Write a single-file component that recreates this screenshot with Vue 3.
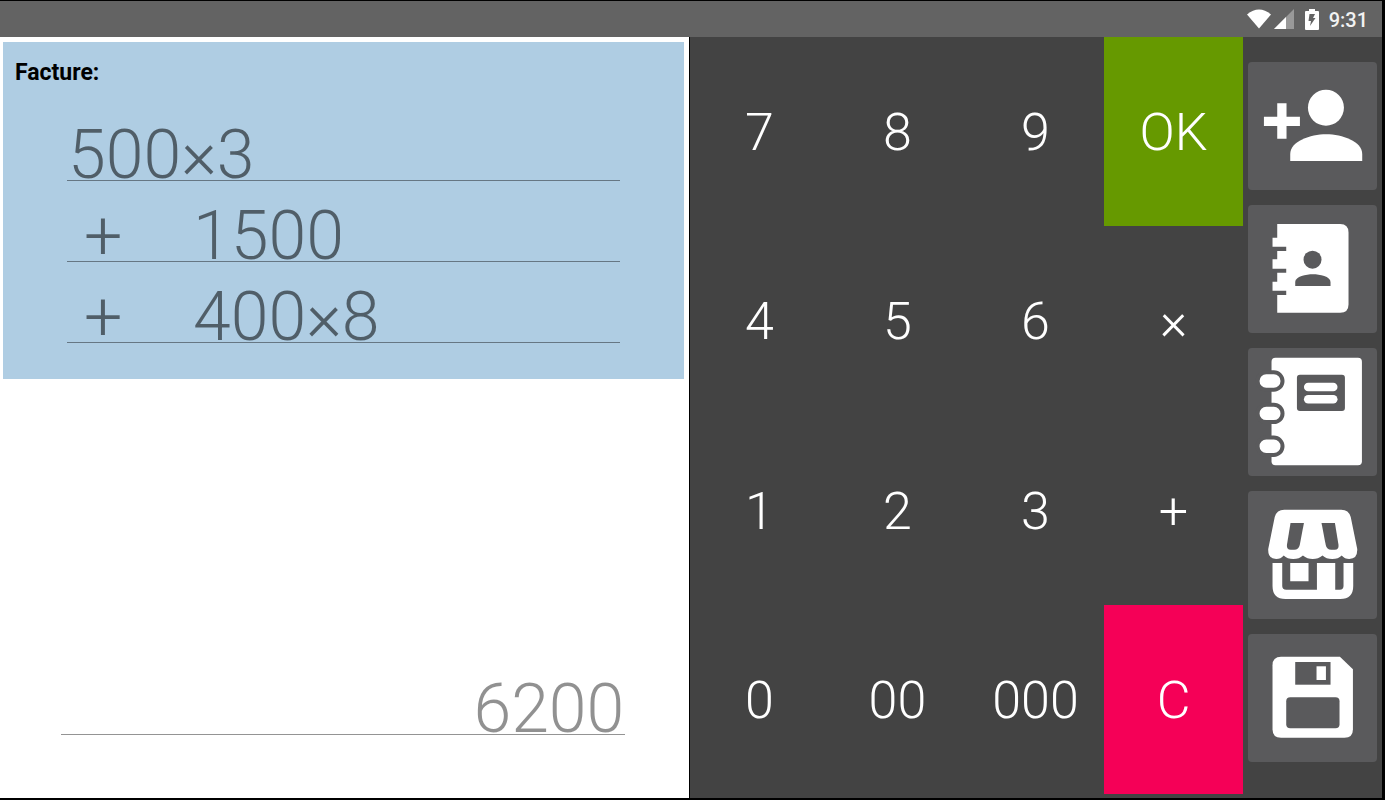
<script setup>
import { ref } from 'vue'

const lines = ref([
  { op: '', value: '500×3' },
  { op: '+', value: '1500' },
  { op: '+', value: '400×8' },
])
const total = ref('6200')

const keys = ['7', '8', '9', 'OK', '4', '5', '6', '×', '1', '2', '3', '+', '0', '00', '000', 'C']
const keyClass = (key) => ({ ok: key === 'OK', clear: key === 'C' })
</script>

<template>
  <div class="screen">
    <header class="status">
      <svg class="wifi" width="24" height="20" viewBox="0 0 24 20" aria-hidden="true">
        <path d="M0 5.500Q12-4.500 24 5.500L12 19.500Z" fill="#fff" />
      </svg>
      <svg class="signal" width="20" height="20" viewBox="0 0 20 20" aria-hidden="true">
        <path d="M20 0V20H0Z" fill="#999" />
        <path d="M12 8V20H0Z" fill="#fff" />
      </svg>
      <svg class="battery" width="14" height="21" viewBox="0 0 14 21" aria-hidden="true">
        <path d="M4 0H10V2H13Q14 2 14 3V20Q14 21 13 21H1Q0 21 0 20V3Q0 2 1 2H4Z" fill="#fff" />
        <path d="M4.500 5H10L8 9H10.500L5 17L6 12H3.500Z" fill="#636363" />
      </svg>
      <time class="clock">9:31</time>
    </header>

    <main class="body">
      <section class="sheet">
        <div class="invoice">
          <h1 class="title">Facture:</h1>
          <div v-for="(line, i) in lines" :key="i" class="line">
            <span v-if="line.op" class="op">{{ line.op }}</span>
            <input v-model="line.value" class="field" type="text" :aria-label="`Ligne ${i + 1}`" />
          </div>
        </div>
        <div class="line total">
          <input v-model="total" class="field" type="text" aria-label="Total" />
        </div>
      </section>

      <section class="keypad">
        <button v-for="key in keys" :key="key" type="button" class="key" :class="keyClass(key)">{{ key }}</button>
      </section>

      <nav class="tools">
        <button type="button" class="tool" aria-label="Ajouter un client">
          <svg viewBox="0 0 129 128" fill="#fff">
            <circle cx="77.700" cy="45.700" r="18" />
            <path d="M42 99V92C42 79.500 62 72.300 78 72.300S114 79.500 114 92V99Z" />
            <path d="M29 41.300H38.300V54.700H51.700V64H38.300V76.700H29V64H15.700V54.700H29Z" />
          </svg>
        </button>
        <button type="button" class="tool" aria-label="Contacts">
          <svg viewBox="0 0 129 128">
            <path
              fill="#fff"
              d="M29 19H92Q100.300 19 100.300 27.500V99.500Q100.300 107.700 92 107.700H29V90H38V85.700H24.300V76.700H29V67.700H38V63.700H24.300V54.300H29V46H38V41.700H24.300V32.700H29Z"
            />
            <g fill="#5a5a5c">
              <circle cx="64.300" cy="54.700" r="9" />
              <path d="M47 81V77C47 71.500 58 69.300 64.700 69.300S82.300 71.500 82.300 77V81Z" />
            </g>
          </svg>
        </button>
        <button type="button" class="tool" aria-label="Carnet">
          <svg viewBox="0 0 129 128">
            <rect x="23.300" y="9.700" width="90.400" height="107.600" rx="4" fill="#fff" />
            <g fill="#fff" stroke="#5a5a5c" stroke-width="4">
              <rect x="9.300" y="24.300" width="25" height="17.400" rx="8.700" />
              <rect x="9.300" y="56.700" width="25" height="17.400" rx="8.700" />
              <rect x="9.300" y="89.500" width="25" height="17.400" rx="8.700" />
            </g>
            <rect x="48.700" y="26.700" width="48" height="36.300" rx="3" fill="#5a5a5c" />
            <g fill="#fff">
              <rect x="55.700" y="34.700" width="33.600" height="8.600" rx="4.300" />
              <rect x="55.700" y="47" width="33.600" height="8.600" rx="4.300" />
            </g>
          </svg>
        </button>
        <button type="button" class="tool" aria-label="Magasin">
          <svg viewBox="0 0 129 128">
            <path
              fill="#fff"
              d="M36 18.700H93Q100.500 18.700 102.500 26L109 58Q109.500 68 101 68Q96.500 68 93.500 64.500Q90 68 84 68Q78 68 74.300 64.500Q70 68 64.500 68Q59 68 54.700 64.500Q51 68 45 68Q39 68 35.500 64.500Q32.500 68 28 68Q19.500 68 20 58L26.500 26Q28.500 18.700 36 18.700Z"
            />
            <path
              fill="#fff"
              d="M24.300 72H34V95Q34 98.700 38 98.700H68.700V72H87V98.700H91.500Q95.300 98.700 95.300 95V72H105V95Q105 108 92 108H37.300Q24.300 108 24.300 95ZM42 72H60.300V90.300H42Z"
            />
            <g fill="#5a5a5c">
              <path d="M42.300 32H55.700L51.500 54Q50.500 58.700 46 58.700H42.500Q38.200 58.700 38.700 54Z" />
              <path d="M86.700 32H73.300L77.500 54Q78.500 58.700 83 58.700H86.500Q90.800 58.700 90.300 54Z" />
            </g>
          </svg>
        </button>
        <button type="button" class="tool" aria-label="Enregistrer">
          <svg viewBox="0 0 129 128">
            <path
              fill="#fff"
              d="M32.800 22.700H91.700L104.700 35.300V95.200Q104.700 103.700 96.200 103.700H32.800Q24.300 103.700 24.300 95.200V31.200Q24.300 22.700 32.800 22.700Z"
            />
            <rect x="47" y="28" width="35.300" height="22.700" fill="#5a5a5c" />
            <rect x="68.300" y="32.300" width="9.400" height="13.700" fill="#fff" />
            <rect x="38" y="63.300" width="53.300" height="31" rx="4" fill="#5a5a5c" />
          </svg>
        </button>
      </nav>
    </main>
  </div>
</template>

<style>
body {
  margin: 0;
  background: #000;
}
</style>

<style scoped>
.screen {
  box-sizing: border-box;
  min-height: 100vh;
  display: flex;
  flex-direction: column;
  border: solid #000;
  border-width: 1px 3px 2px 0;
  background: #434343;
  font-family: Roboto, "Liberation Sans", sans-serif;
}

button,
input {
  margin: 0;
  padding: 0;
  border: 0;
  font: inherit;
  color: inherit;
  background: none;
}

.status {
  display: flex;
  align-items: center;
  justify-content: flex-end;
  height: 36px;
  padding-right: 14px;
  background: #636363;
}

.signal {
  margin-left: 3px;
}

.battery {
  margin-left: 11px;
}

.clock {
  margin-left: 10px;
  font-size: 20px;
  font-weight: 500;
  line-height: 36px;
  padding-top: 2px;
  color: #f2f2f2;
}

.body {
  flex: 1;
  display: grid;
  grid-template-columns: minmax(0, 500fr) minmax(0, 400fr) minmax(0, 101fr);
}

.sheet {
  display: flex;
  flex-direction: column;
  justify-content: space-between;
  border-right: 1px solid #000;
  background: #fff;
}

.invoice {
  margin: 5px 5px 0 3px;
  padding: 17px 64px 21px;
  background: #afcde3;
}

.title {
  margin: 0 0 28px -52px;
  font-size: 23px;
  font-weight: 700;
  line-height: 28px;
  color: #000;
}

.line {
  display: flex;
  height: 81px;
  font-size: 68px;
  font-weight: 300;
  line-height: 81px;
  color: rgba(0, 0, 0, 0.54);
  background: linear-gradient(rgba(0, 0, 0, 0.42), rgba(0, 0, 0, 0.42)) 0 65px / 100% 1px no-repeat;
}

.op {
  width: 108px;
  padding-left: 17px;
}

.field {
  flex: 1;
  min-width: 0;
  height: 81px;
  padding: 0 1px;
  outline: 0;
}

.total {
  margin: 0 64px 48px 61px;
  color: rgba(0, 0, 0, 0.43);
}

.total .field {
  text-align: right;
}

.keypad {
  display: grid;
  grid-template-columns: repeat(4, 1fr);
  grid-template-rows: repeat(4, 1fr);
  padding-bottom: 4px;
}

.key {
  padding-top: 2px;
  font-size: 52px;
  font-weight: 300;
  color: #fff;
}

.ok {
  background: #669900;
}

.clear {
  background: #f50057;
}

.tools {
  display: flex;
  flex-direction: column;
  gap: 15px;
  padding: 25px 5px 0;
}

.tool {
  height: 128px;
  border-radius: 4px;
  background: #5a5a5c;
}

.tool svg {
  display: block;
  width: 100%;
  height: 100%;
}
</style>
